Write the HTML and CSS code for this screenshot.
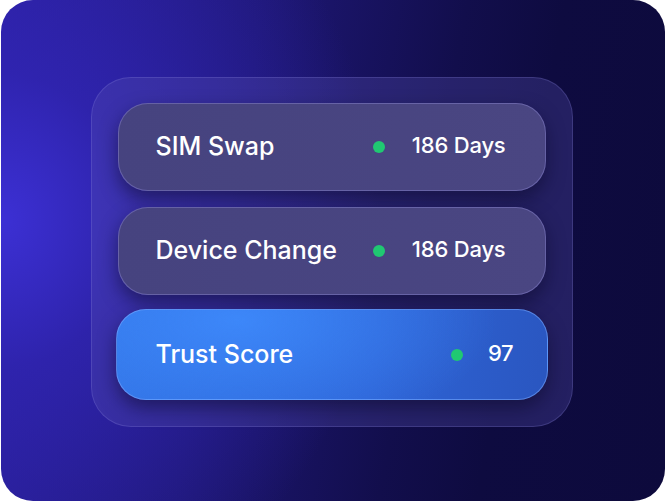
FILE: index.html
```html
<!DOCTYPE html>
<html>
<head>
<meta charset="utf-8">
<link rel="stylesheet" href="styles.css">
</head>
<body>
<div class="card">
  <div class="panel">
    <div class="row">
      <span class="label">SIM Swap</span>
      <span class="status"><span class="dot"></span><span class="value">186 Days</span></span>
    </div>
    <div class="row">
      <span class="label">Device Change</span>
      <span class="status"><span class="dot"></span><span class="value">186 Days</span></span>
    </div>
    <div class="row row-score">
      <span class="label">Trust Score</span>
      <span class="status"><span class="dot"></span><span class="value">97</span></span>
    </div>
  </div>
</div>
</body>
</html>
```

FILE: styles.css
```css
html, body {
  margin: 0;
  padding: 0;
  background: #ffffff;
}
body {
  width: 665px;
  height: 502px;
  font-family: "Inter", "Lato", sans-serif;
}
.card {
  box-sizing: border-box;
  width: 664px;
  height: 501px;
  margin-left: 1px;
  border-radius: 32px;
  background:
    radial-gradient(ellipse 380px 420px at 0px 220px, rgba(60, 48, 212, 1) 0%, rgba(50, 38, 185, 0.7) 35%, rgba(30, 22, 120, 0) 100%),
    linear-gradient(100deg, #2a1f9c 0%, #1e1775 35%, #120e4c 62%, #0e0b40 75%, #0d0a3c 100%);
  display: flex;
  align-items: flex-start;
  justify-content: center;
  padding-top: 77px;
}
.panel {
  box-sizing: border-box;
  width: 482px;
  height: 350px;
  margin-left: -3px;
  border-radius: 40px;
  background: rgba(90, 84, 180, 0.3);
  border: 1px solid rgba(150, 145, 230, 0.22);
  padding: 25px 26px 0 26px;
  display: flex;
  flex-direction: column;
  gap: 16px;
}
.row {
  box-sizing: border-box;
  height: 88px;
  border-radius: 30px;
  background: linear-gradient(90deg, #46437f 0%, #4a4682 100%);
  border: 1px solid rgba(160, 155, 235, 0.35);
  box-shadow: 0 8px 18px rgba(10, 8, 40, 0.5);
  display: flex;
  align-items: center;
  justify-content: space-between;
  padding: 0 39px 0 37px;
  color: #ffffff;
}
.row-score {
  height: 91px;
  margin: -2px -2px 0 -2px;
  padding: 0 33px 0 39px;
  background:
    radial-gradient(ellipse 260px 120px at 120px 10px, rgba(62, 138, 252, 0.9) 0%, rgba(62, 138, 252, 0) 100%),
    linear-gradient(100deg, #3274e6 0%, #2e64d6 60%, #2a56c0 100%);
  border: 1px solid rgba(120, 170, 255, 0.55);
}
.row-score .status {
  gap: 25px;
}
.label {
  font-size: 25px;
  font-weight: 500;
  letter-spacing: 0;
  margin-top: -2px;
}
.status {
  display: flex;
  align-items: center;
  gap: 27px;
}
.dot {
  width: 12px;
  height: 12px;
  border-radius: 50%;
  background: #20c872;
}
.value {
  font-size: 22px;
  font-weight: 500;
  letter-spacing: -0.2px;
  margin-top: -4px;
}
```
